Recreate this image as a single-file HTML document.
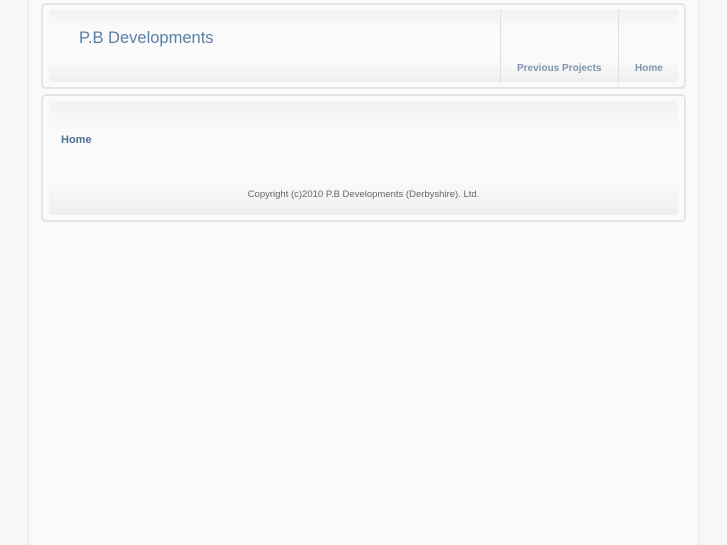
<!DOCTYPE html>
<html><head><style>
html,body{margin:0;padding:0;width:727px;height:545px;overflow:hidden;background:#f6f7f8;font-family:"Liberation Sans",sans-serif}
.col{position:absolute;left:28px;top:0;width:669px;height:545px;background:#f9fafa;border-left:1px solid #e8e9ea;border-right:1px solid #e8e9ea}
.box{position:absolute;left:41px;width:645px;background:#fafafb;border:2px solid #e3e4e6;border-radius:5px;box-sizing:border-box}
.inner{position:absolute;left:6px;right:6px;top:5px;bottom:5px;background:linear-gradient(#f1f2f3,#fafafb 25%,#fafafb 70%,#eeeff0);border-radius:3px}
.title{position:absolute;left:36px;top:24px;font-size:16.5px;color:#5a7fa6}
.nav{position:absolute;top:58px;font-size:10px;font-weight:bold;color:#8194ac}
.sep{position:absolute;width:1px;height:74px;background:#dfe0e2}
</style></head><body>
<div class="col"></div>
<div class="box" style="top:3px;height:86px">
  <div class="inner"></div>
  <div class="title">P.B Developments</div>
  <div class="sep" style="left:457px;top:5px"></div>
  <div class="sep" style="left:575px;top:5px"></div>
  <div class="nav" style="left:474px">Previous Projects</div>
  <div class="nav" style="left:592px">Home</div>
</div>
<div class="box" style="top:94px;height:128px">
  <div class="inner"></div>
  <div style="position:absolute;left:18px;top:38px;font-size:11px;font-weight:bold;color:#4e6f96">Home</div>
  <div style="position:absolute;left:0;right:0;top:93px;text-align:center;font-size:9.5px;color:#666">Copyright (c)2010 P.B Developments (Derbyshire). Ltd.</div>
</div>
</body></html>
